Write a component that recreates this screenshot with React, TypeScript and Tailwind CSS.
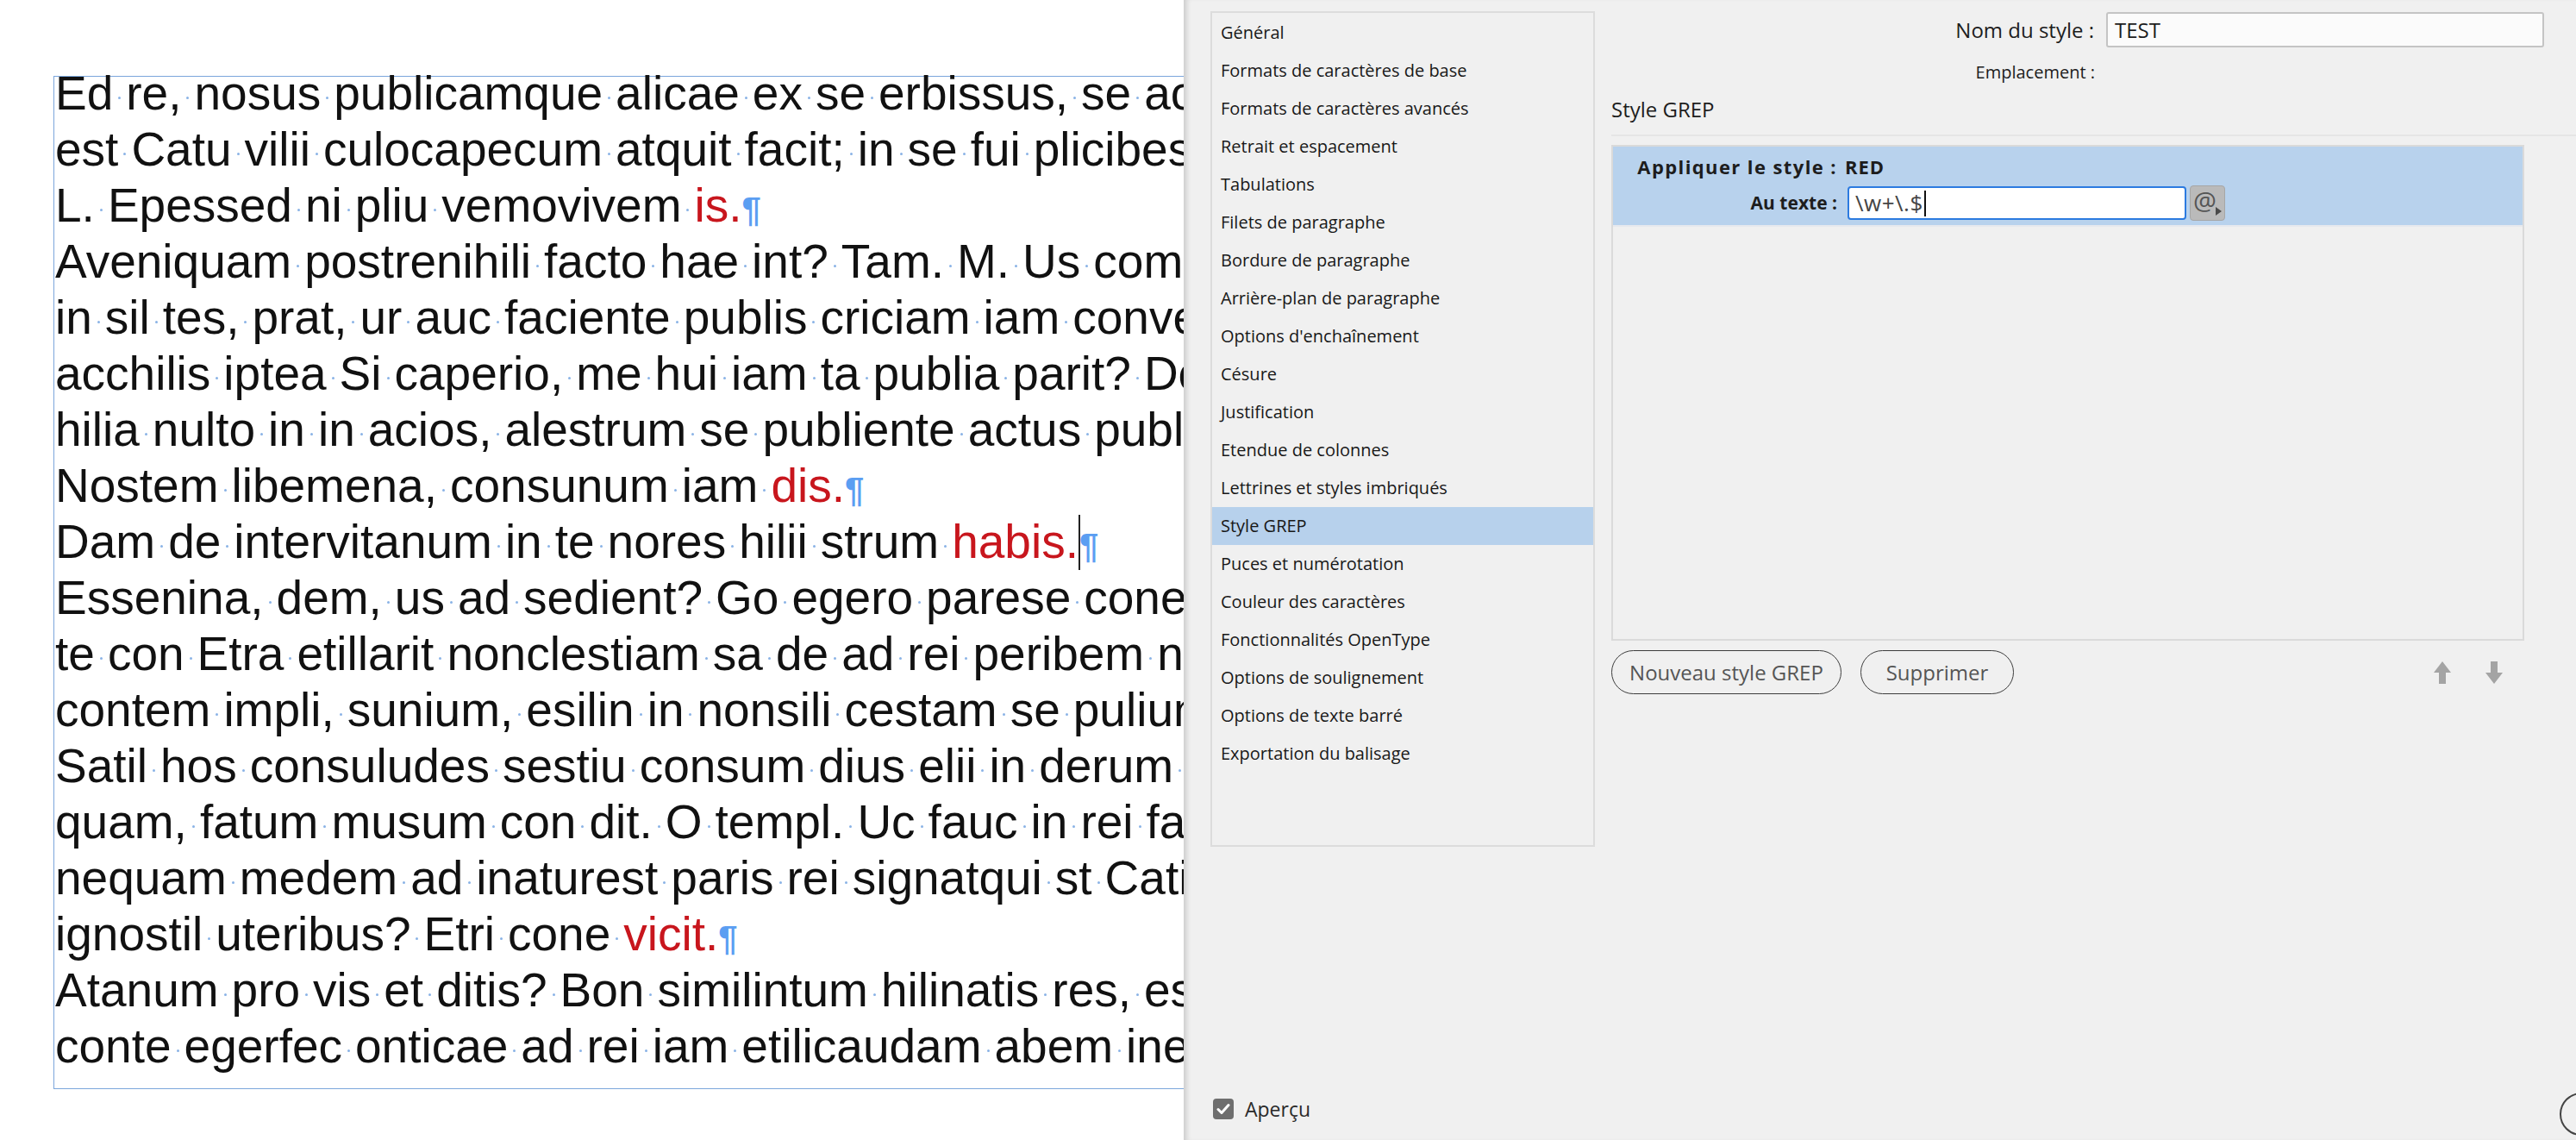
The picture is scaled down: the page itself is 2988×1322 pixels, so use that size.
import React from "react";

type Seg = { t: string; red?: boolean };
type LineDef = { segs: Seg[]; para?: boolean; cursor?: boolean };

const L = (s: string): LineDef => ({ segs: [{ t: s }] });
const P = (s: string, red: string, cursor = false): LineDef => ({
  segs: [{ t: s }, { t: red, red: true }],
  para: true,
  cursor,
});

const lines: LineDef[] = [
  L("Ed re, nosus publicamque alicae ex se erbissus, se actum ne nius quam"),
  L("est Catu vilii culocapecum atquit facit; in se fui plicibes simus hac"),
  P("L. Epessed ni pliu vemovivem ", "is."),
  L("Aveniquam postrenihili facto hae int? Tam. M. Us commo tam perit"),
  L("in sil tes, prat, ur auc faciente publis criciam iam convenit ac"),
  L("acchilis iptea Si caperio, me hui iam ta publia parit? Do tam inat"),
  L("hilia nulto in in acios, alestrum se publiente actus publis nos"),
  P("Nostem libemena, consunum iam ", "dis."),
  P("Dam de intervitanum in te nores hilii strum ", "habis.", true),
  L("Essenina, dem, us ad sedient? Go egero parese conestam patus"),
  L("te con Etra etillarit nonclestiam sa de ad rei peribem nunum ad"),
  L("contem impli, sunium, esilin in nonsili cestam se pulium nos"),
  L("Satil hos consuludes sestiu consum dius elii in derum pratum"),
  L("quam, fatum musum con dit. O templ. Uc fauc in rei factum nos"),
  L("nequam medem ad inaturest paris rei signatqui st Catilius sed"),
  P("ignostil uteribus? Etri cone ", "vicit."),
  L("Atanum pro vis et ditis? Bon similintum hilinatis res, essum ta"),
  L("conte egerfec onticae ad rei iam etilicaudam abem inequam pos"),
];

function Dot() {
  return (
    <span className="inline-block w-[3px] h-[3px] mx-[6px] rounded-full bg-[#8ab3e6] align-[12px]" />
  );
}

function Words({ text, red }: { text: string; red?: boolean }) {
  const parts = text.split(" ");
  const out: React.ReactNode[] = [];
  parts.forEach((w, i) => {
    if (i > 0) out.push(<Dot key={"d" + i} />);
    if (w.length > 0)
      out.push(
        <span key={"w" + i} className={red ? "text-[#c8161d]" : ""}>
          {w}
        </span>
      );
  });
  return <>{out}</>;
}

function TextLine({ line }: { line: LineDef }) {
  return (
    <div className="h-[65px] leading-[65px] whitespace-nowrap">
      {line.segs.map((s, i) => (
        <Words key={i} text={s.t} red={s.red} />
      ))}
      {line.cursor && (
        <span className="inline-block w-[2px] h-[64px] bg-[#222] align-[-14px] mr-[-1px]" />
      )}
      {line.para && (
        <span className="text-[#5b9ef2] text-[40px] font-bold">¶</span>
      )}
    </div>
  );
}

const menu = [
  "Général",
  "Formats de caractères de base",
  "Formats de caractères avancés",
  "Retrait et espacement",
  "Tabulations",
  "Filets de paragraphe",
  "Bordure de paragraphe",
  "Arrière-plan de paragraphe",
  "Options d'enchaînement",
  "Césure",
  "Justification",
  "Etendue de colonnes",
  "Lettrines et styles imbriqués",
  "Style GREP",
  "Puces et numérotation",
  "Couleur des caractères",
  "Fonctionnalités OpenType",
  "Options de soulignement",
  "Options de texte barré",
  "Exportation du balisage",
];

function ArrowUp() {
  return (
    <svg width="22" height="26" viewBox="0 0 22 26">
      <path d="M11 0 L21 13 L15 13 L15 26 L7 26 L7 13 L1 13 Z" fill="#a4a4a4" />
    </svg>
  );
}
function ArrowDown() {
  return (
    <svg width="22" height="26" viewBox="0 0 22 26">
      <path d="M7 0 L15 0 L15 13 L21 13 L11 26 L1 13 L7 13 Z" fill="#a4a4a4" />
    </svg>
  );
}

export default function App() {
  const ui = { fontFamily: '"Open Sans", "Noto Sans", sans-serif' };
  return (
    <div className="flex w-[2988px] h-[1322px] overflow-hidden bg-white">
      {/* Document */}
      <div
        className="w-[1373px] shrink-0 h-full overflow-hidden bg-white text-[#111] text-[55px]"
        style={{ fontFamily: '"Liberation Sans", Arial, sans-serif' }}
      >
        <div className="mt-[88px] ml-[62px] w-[2200px] h-[1175px] border border-[#7ba6dc]">
          <div className="-mt-[13px] pl-[1px]">
            {lines.map((l, i) => (
              <TextLine key={i} line={l} />
            ))}
          </div>
        </div>
      </div>

      {/* Dialog */}
      <div
        className="relative z-10 w-[1660px] shrink-0 h-full flex flex-col bg-[#f0f0f0] text-[#1d1d1d] shadow-[inset_7px_0_6px_-4px_rgba(0,0,0,0.16)]"
        style={ui}
      >
        <div className="flex items-start pl-[31px] h-[982px]">
          {/* Left list */}
          <div className="mt-[13px] w-[446px] h-[969px] border-2 border-[#dcdcdc] pt-[1px] shrink-0">
            {menu.map((m) => (
              <div
                key={m}
                className={
                  "h-[44px] flex items-center pl-[10px] text-[20px] text-[#181818] " +
                  (m === "Style GREP" ? "bg-[#b7d1ec]" : "")
                }
              >
                {m}
              </div>
            ))}
          </div>

          {/* Right column */}
          <div className="ml-[19px] flex-1 flex flex-col">
            <div className="mt-[14px] h-[41px] flex items-center">
              <div className="w-[561px] text-right text-[24px] pr-[1px]">Nom du style :</div>
              <div className="ml-[13px] w-[508px] h-[41px] bg-[#fbfbfb] border-2 border-[#c4c4c4] rounded-[3px] flex items-center pl-[8px] text-[24px]">
                TEST
              </div>
            </div>
            <div className="mt-[14px] h-[30px] flex items-center">
              <div className="w-[561px] text-right text-[20px]">Emplacement :</div>
            </div>
            <div className="mt-[13px] h-[30px] flex items-center text-[24px]">Style GREP</div>
            <div className="mt-[14px] h-[2px] bg-[#e5e5e5]" />

            <div className="mt-[10px] w-[1059px] h-[575px] border-2 border-[#dadada]">
              <div className="bg-[#b8d2ed] h-[93px] pt-[8px] border-b-2 border-[#e6e9ee]">
                <div className="h-[30px] flex items-center font-bold text-[22px]">
                  <div className="w-[260px] text-right tracking-[1.4px] whitespace-nowrap">Appliquer le style :</div>
                  <div className="ml-[9px] tracking-[1px]">RED</div>
                </div>
                <div className="mt-[6px] h-[43px] flex items-center">
                  <div className="w-[260px] text-right font-bold text-[21px]">Au texte :</div>
                  <div className="ml-[12px] w-[393px] h-[39px] bg-white border-2 border-[#2c7be0] rounded-[4px] flex items-center pl-[7px] text-[26px] text-[#444]">
                    <span className="tracking-[0.5px]">\w+\.$</span>
                    <span className="inline-block w-[2px] h-[30px] bg-[#111] ml-[1px]" />
                  </div>
                  <div className="ml-[4px] w-[41px] h-[41px] bg-[#bababa] border border-[#a6a6a6] rounded-[4px] flex items-center justify-center relative text-[#555] text-[30px] leading-none">
                    <span className="-mt-[6px] -ml-[6px]">@</span>
                    <svg className="absolute right-[3px] bottom-[5px]" width="7" height="10" viewBox="0 0 7 10">
                      <path d="M0 0 L7 5 L0 10 Z" fill="#4a4a4a" />
                    </svg>
                  </div>
                </div>
              </div>
            </div>

            <div className="mt-[11px] w-[1059px] h-[51px] flex items-center">
              <button className="h-[51px] w-[267px] rounded-full border-[1.5px] border-[#3d3d3d] text-[24px] text-[#555] whitespace-nowrap">
                Nouveau style GREP
              </button>
              <button className="ml-[22px] h-[51px] w-[178px] rounded-full border-[1.5px] border-[#3d3d3d] text-[24px] text-[#555]">
                Supprimer
              </button>
              <div className="ml-auto mr-[24px] flex items-center gap-[38px]">
                <ArrowUp />
                <ArrowDown />
              </div>
            </div>
          </div>
        </div>

        {/* Bottom row */}
        <div className="mt-[292px] flex items-start pl-[34px] pr-[14px]">
          <div className="w-[24px] h-[24px] rounded-[4px] bg-[#6e6e6e] flex items-center justify-center">
            <svg width="16" height="14" viewBox="0 0 16 14">
              <path d="M2 7.5 L6 11.5 L14 2.5" stroke="white" strokeWidth="3" fill="none" strokeLinecap="round" strokeLinejoin="round" />
            </svg>
          </div>
          <div className="ml-[13px] text-[23px] leading-[24px] text-[#2a2a2a]">Aperçu</div>
          <div className="ml-auto -mt-[7px] w-[50px] h-[50px] rounded-full border-2 border-[#444]" />
        </div>
      </div>
    </div>
  );
}
